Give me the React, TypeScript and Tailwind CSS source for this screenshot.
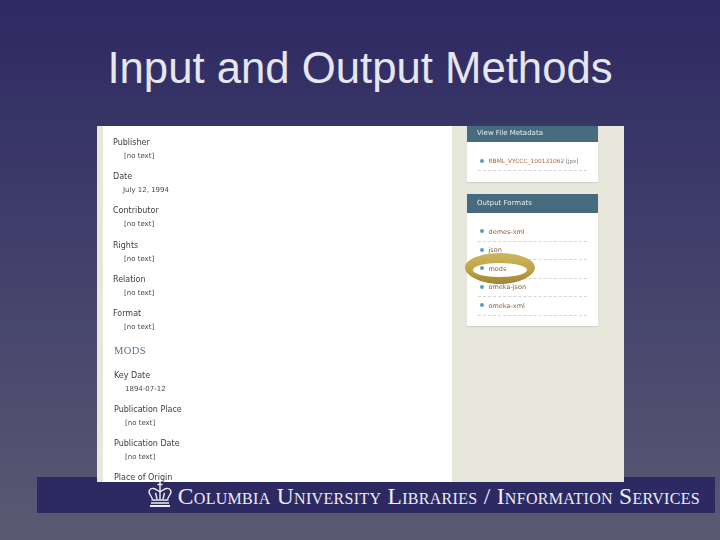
const sans = "font-['DejaVu_Sans',sans-serif]";

function Field({ label, value, valueClass = "ml-[11px]", h = "h-[34.2px]" }: { label: string; value: string; valueClass?: string; h?: string }) {
  return (
    <div className={`${h} shrink-0`}>
      <div className="h-[13px] text-[8px] leading-[13px] text-[#3c3c3c]">{label}</div>
      <div className={`h-[14px] pt-px text-[7px] leading-[13px] text-[#4a4a4a] ${valueClass}`}>{value}</div>
    </div>
  );
}

function Item({ label }: { label: string }) {
  return (
    <div className="mx-[11px] flex h-[18.5px] items-center gap-[4.500px] border-b border-dashed border-[#d5d5d5] pl-[2px] pt-[2px] text-[6.5px] text-[#8f6140]">
      <span className="mb-[3px] size-[4px] shrink-0 rounded-full bg-[#5c9cc4]" />
      <span>{label}</span>
    </div>
  );
}

function Header({ label, h }: { label: string; h: string }) {
  return (
    <div className={`${h} flex items-center bg-[#466b7f] pb-px pl-[10px] text-[7px] text-[#e8eef0]`}>{label}</div>
  );
}

export default function App() {
  return (
    <div className="flex h-[540px] w-[720px] flex-col overflow-hidden bg-gradient-to-b from-[#2e2963] to-[#5b5972]">
      <h1 className="h-[126px] pt-[37px] text-center font-['Liberation_Sans',sans-serif] text-[43.7px] leading-[62px] text-[#e6e6ee]">
        Input and Output Methods
      </h1>

      <div className={`relative z-10 ml-[97px] flex h-[356px] w-[527px] shrink-0 overflow-hidden bg-[#e8e7dc] pl-[6px] ${sans}`}>
        <div className="flex h-full w-[349px] flex-col overflow-hidden bg-white pl-[10px] pt-[10px] blur-[0.35px]">
          <Field label="Publisher" value="[no text]" />
          <Field label="Date" value="July 12, 1994" valueClass="ml-[10px]" />
          <Field label="Contributor" value="[no text]" />
          <Field label="Rights" value="[no text]" />
          <Field label="Relation" value="[no text]" />
          <Field label="Format" value="[no text]" />
          <div className="h-[27.8px] shrink-0 pl-px pt-[3px] font-['Liberation_Serif',serif] text-[10.5px] leading-[14px] tracking-[0.4px] text-[#5d7285]">MODS</div>
          <div className="flex flex-col pl-[1px]">
            <Field label="Key Date" value="1894-07-12" />
            <Field label="Publication Place" value="[no text]" />
            <Field label="Publication Date" value="[no text]" />
            <Field label="Place of Origin" value="" />
          </div>
        </div>

        <div className="flex w-[172px] flex-col pl-[15px]">
          <div className="w-[131px] shrink-0 bg-white shadow-[0_1px_1px_#d0cfc4] blur-[0.3px]">
            <Header label="View File Metadata" h="h-[16px]" />
            <div className="h-[40px] pt-[10px]">
              <div className="mx-[11px] flex h-[19px] items-center gap-[4.500px] border-b border-dashed border-[#d5d5d5] pl-[2px] text-[5.900px] whitespace-nowrap text-[#a8683a]">
                <span className="size-[4px] shrink-0 rounded-full bg-[#5c9cc4]" />
                <span>RBML_VYCCC_100131062</span>
                <span className="-ml-[3px] text-[5.500px] text-[#777]">[jpx]</span>
              </div>
            </div>
          </div>

          <div className="mt-[12px] w-[131px] shrink-0 bg-white pb-[10px] shadow-[0_1px_1px_#d0cfc4] blur-[0.3px]">
            <Header label="Output Formats" h="h-[19px]" />
            <div className="pt-[10px]">
              <Item label="demes-xml" />
              <Item label="json" />
              <Item label="mods" />
              <Item label="omeka-json" />
              <Item label="omeka-xml" />
            </div>
          </div>

          <svg className="absolute left-[368px] top-[127px]" width="70" height="31" viewBox="0 0 70 31">
            <defs>
              <linearGradient id="ring" x1="0" y1="0" x2="0" y2="1">
                <stop offset="0" stopColor="#cdb662" />
                <stop offset="0.55" stopColor="#bfa443" />
                <stop offset="1" stopColor="#9c8434" />
              </linearGradient>
            </defs>
            <path
              fillRule="evenodd"
              fill="url(#ring)"
              d="M0 14.500C0 6.500 15.500 0 35 0s35 6.500 35 14.500S54.500 31 35 31 0 22.500 0 14.500ZM8 17C8 20.900 20 24 35 24s27-3.100 27-7-12-7-27-7S8 13.100 8 17Z"
            />
          </svg>
        </div>
      </div>

      <div className="-mt-[5px] ml-[37px] flex h-[36px] w-[678px] shrink-0 items-end justify-end bg-[#2d2963] pr-[15px]">
        <svg className="relative z-20 mb-[6px] mr-[5px]" width="26" height="25" viewBox="0 0 26 25" fill="none" stroke="#eeeef5" strokeWidth="1.400">
          <path d="M13 0v9M10.500 2.500h5" />
          <path d="M5.500 17 3 12.500C.5 8.500 3.500 6 6.500 6.500c3 .5 4.500 3 6.500 3s3.500-2.500 6.500-3c3-.5 6 2 3.500 6L20.500 17" />
          <path d="M10 17 8.500 11M16 17l1.500-6M13 9.500V17" />
          <path d="M4.500 18h17M4 21h18" strokeWidth="1.600" />
          <path d="M3 24h20" strokeWidth="2" />
        </svg>
        <div className="mb-[3px] whitespace-nowrap font-['Liberation_Serif',serif] text-[23.500px] leading-[28px] tracking-[0.31px] text-[#eeeef5] [font-variant:small-caps]">
          Columbia University Libraries / Information Services
        </div>
      </div>
    </div>
  );
}
